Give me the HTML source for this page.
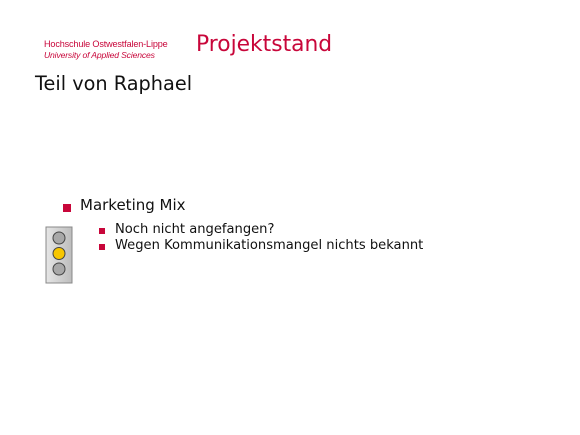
<!DOCTYPE html>
<html><head><style>
body{margin:0;width:580px;height:435px;background:#fff;position:relative;overflow:hidden;font-family:"DejaVu Sans","Liberation Sans",sans-serif;}
.t{position:absolute;white-space:nowrap;line-height:1;}
.red{color:#c8063a;}
.b{position:absolute;background:#c8063a;}
</style></head><body>
<div class="t red" style="left:44px;top:40px;font-size:9.1px;letter-spacing:-0.15px;font-family:'Liberation Sans',sans-serif;">Hochschule Ostwestfalen-Lippe</div>
<div class="t red" style="left:44px;top:51px;font-size:8.6px;font-style:italic;letter-spacing:-0.15px;font-family:'Liberation Sans',sans-serif;">University of Applied Sciences</div>
<div class="t red" style="left:196px;top:34px;font-size:21.8px;">Projektstand</div>
<div class="t" style="left:35px;top:74px;font-size:19.3px;color:#111;">Teil von Raphael</div>
<div class="b" style="left:63px;top:204px;width:8px;height:8px;"></div>
<div class="t" style="left:80px;top:198px;font-size:15px;color:#111;">Marketing Mix</div>
<div class="b" style="left:99px;top:228px;width:6px;height:6px;"></div>
<div class="t" style="left:115px;top:223px;font-size:13.1px;color:#111;">Noch nicht angefangen?</div>
<div class="b" style="left:99px;top:244px;width:6px;height:6px;"></div>
<div class="t" style="left:115px;top:239px;font-size:13.1px;color:#111;">Wegen Kommunikationsmangel nichts bekannt</div>
<svg style="position:absolute;left:45px;top:226px" width="28" height="58">
<defs><linearGradient id="g" x1="0" x2="1"><stop offset="0" stop-color="#e6e6e6"/><stop offset="1" stop-color="#bdbdbd"/></linearGradient></defs>
<rect x="1" y="1" width="26" height="56" fill="url(#g)" stroke="#888" stroke-width="1"/>
<circle cx="14" cy="12" r="6" fill="#a8a8a8" stroke="#444"/>
<circle cx="14" cy="27.5" r="6" fill="#f7c600" stroke="#444"/>
<circle cx="14" cy="43" r="6" fill="#a8a8a8" stroke="#444"/>
</svg>
</body></html>
